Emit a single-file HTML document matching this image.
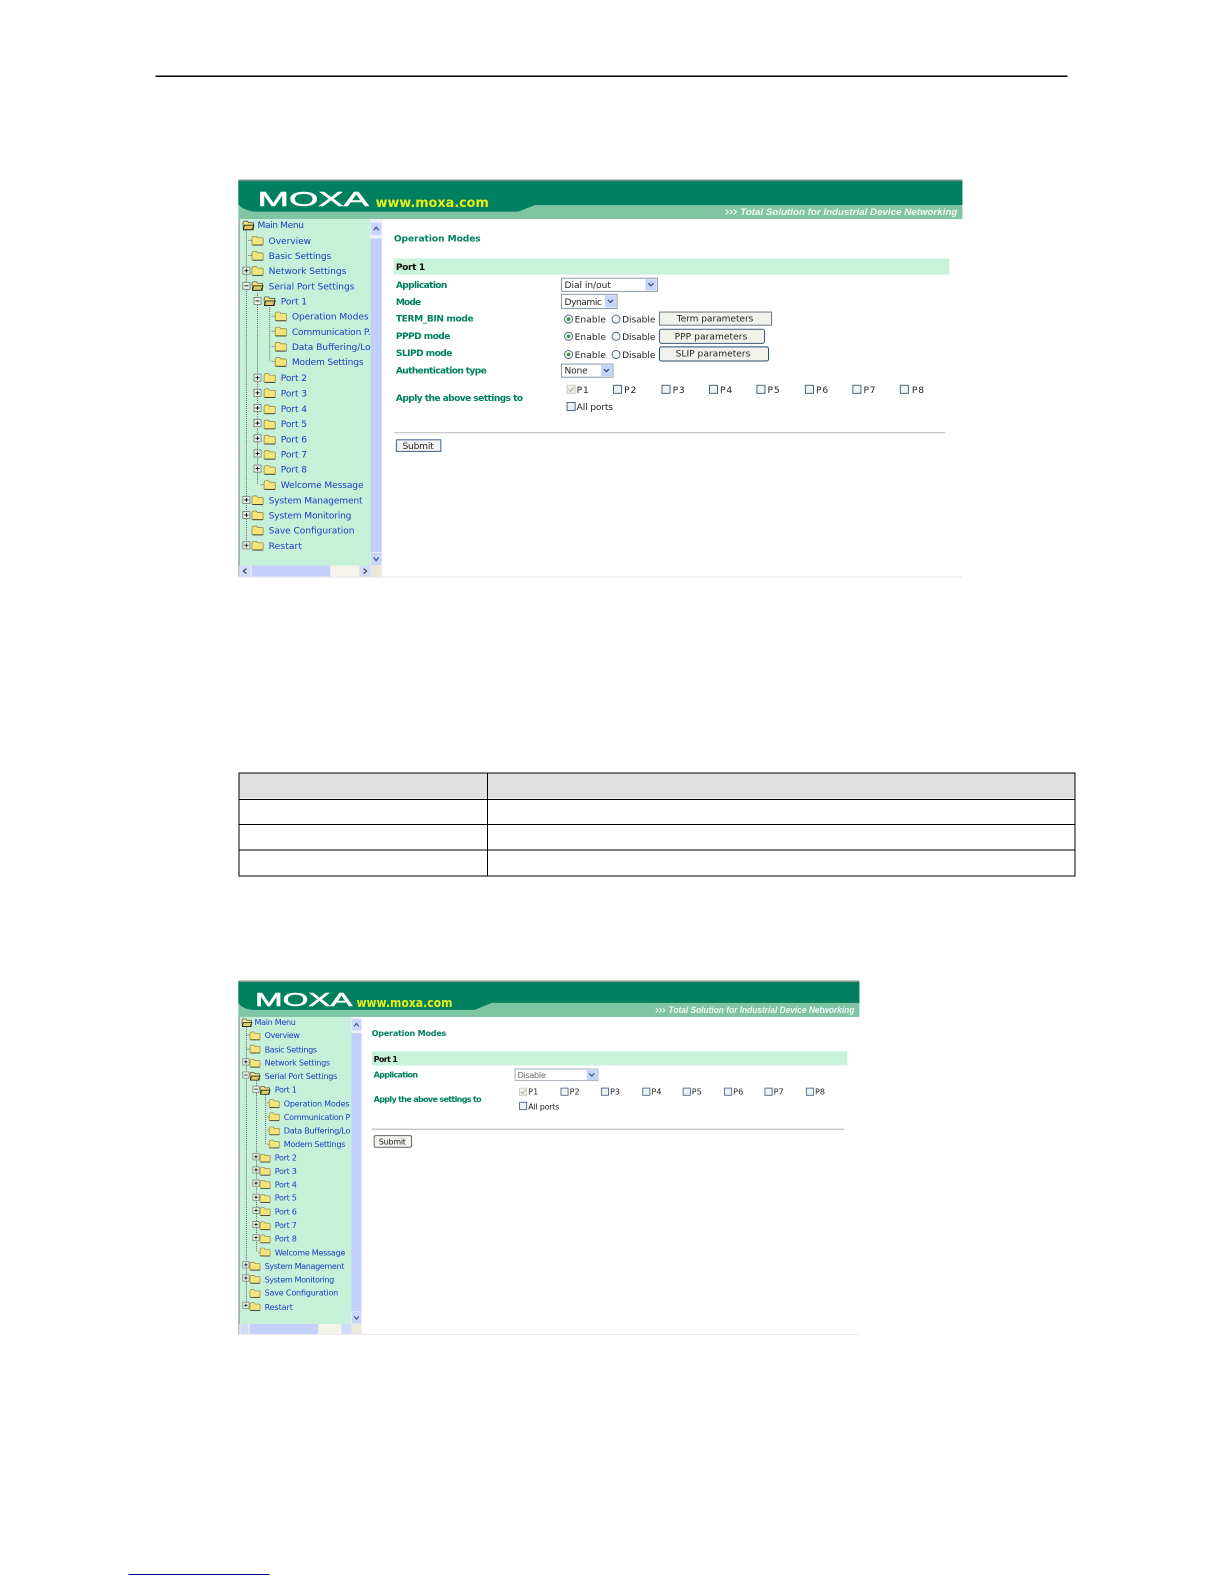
<!DOCTYPE html>
<html><head><meta charset="utf-8"><title>Operation Modes</title>
<style>
html,body{margin:0;padding:0;background:#fff;width:1224px;height:1584px;overflow:hidden}
svg{display:block}
text{font-family:"DejaVu Sans","Liberation Sans",sans-serif;font-size:9px}
.s2 .t{font-size:8px}
.t{fill:#1a3cc4}
.g{fill:#00805f;font-weight:bold}
.k{fill:#222}
.b{fill:#111;font-weight:bold}
.d{stroke:#666;stroke-width:1;stroke-dasharray:1 1;fill:none}
</style></head><body>
<svg width="1224" height="1584" viewBox="0 0 1212 1568.500" xmlns="http://www.w3.org/2000/svg">
<defs>
<symbol id="f" viewBox="0 0 12 10" overflow="visible"><path d="M0.500 2.500 L1.500 1 H5 L6 2.500 H11 Q11.500 2.500 11.500 3 V9 Q11.500 9.500 11 9.500 H1 Q0.500 9.500 0.500 9 Z" fill="#f4e47a" stroke="#8a8040" stroke-width="0.7"/><path d="M1 9.700H11.500" stroke="#333" stroke-width="0.8"/></symbol>
<symbol id="o" viewBox="0 0 12 10" overflow="visible"><path d="M0.500 2.500 L1.500 1 H5 L6 2.500 H11 V9.500 H1 Z" fill="#f4e47a" stroke="#555" stroke-width="0.8"/><path d="M2 5 H11.500 L9.500 9.500 H1 Z" fill="#e0cc66" stroke="#222" stroke-width="0.9"/></symbol>
<symbol id="p" viewBox="0 0 8 8" overflow="visible"><rect x="0.500" y="0.500" width="7" height="7" fill="#e8f4ec" stroke="#777" stroke-width="0.8"/><path d="M2 4H6M4 2V6" stroke="#111" stroke-width="0.9"/></symbol>
<symbol id="m" viewBox="0 0 8 8" overflow="visible"><rect x="0.500" y="0.500" width="7" height="7" fill="#e8f4ec" stroke="#777" stroke-width="0.8"/><path d="M2 4H6" stroke="#111" stroke-width="0.9"/></symbol>
<symbol id="c" viewBox="0 0 9 9" overflow="visible"><rect x="0.500" y="0.500" width="8" height="8" fill="#eef0f2" stroke="#3d5a78" stroke-width="0.9"/></symbol>
<symbol id="cd" viewBox="0 0 9 9" overflow="visible"><rect x="0.500" y="0.500" width="8" height="8" fill="#f0f0ea" stroke="#c4c4bc" stroke-width="0.9"/><path d="M2 4.500 L4 6.500 L7 2.500" fill="none" stroke="#a8a8a0" stroke-width="1"/></symbol>
<symbol id="r" viewBox="0 0 9 9" overflow="visible"><circle cx="4.500" cy="4.500" r="4" fill="#f4f6f4" stroke="#46607a" stroke-width="0.9"/><circle cx="4.500" cy="4.500" r="1.800" fill="#2f9a4c"/></symbol>
<symbol id="r0" viewBox="0 0 9 9" overflow="visible"><circle cx="4.500" cy="4.500" r="4" fill="#f4f6f4" stroke="#46607a" stroke-width="0.9"/></symbol>
<symbol id="ar" viewBox="0 0 11 13" overflow="visible"><rect x="0" y="0" width="11" height="13" fill="#c8d6fa" stroke="#e8eefc" stroke-width="0.8"/><path d="M3 5 L5.500 8 L8 5" fill="none" stroke="#4a5f9a" stroke-width="1.400"/></symbol>
<filter id="bl" x="0" y="0" width="100%" height="100%"><feGaussianBlur stdDeviation="0.3"/></filter>
</defs>

<rect x="154" y="75" width="903" height="1" fill="#000" shape-rendering="crispEdges"/>

<!-- SCREEN 1 -->
<g filter="url(#bl)">
<rect x="236" y="178" width="717" height="393" fill="#fff"/>
<rect x="236" y="178" width="717" height="39" fill="#7fc4a3"/>
<path d="M236 178 H953 V203 H530 L513 209.500 H252 Q240 208 236 202 Z" fill="#00805f"/>
<rect x="236" y="178" width="717" height="1.500" fill="#7a8a84"/>
<text transform="translate(255 204) scale(1.36 1)" style="font-size:20px;font-family:'Liberation Sans',sans-serif" fill="#fff" stroke="#fff" stroke-width="0.5" textLength="81" lengthAdjust="spacingAndGlyphs">MOXA</text>
<text x="372" y="205" style="font-size:13.500px;font-family:'DejaVu Sans',sans-serif;font-weight:bold" fill="#e6ee1e" textLength="112" lengthAdjust="spacingAndGlyphs">www.moxa.com</text>
<text x="718" y="213" style="font-size:9.500px;font-weight:bold;font-style:italic" fill="#fff" textLength="12" lengthAdjust="spacingAndGlyphs">&gt;&gt;&gt;</text>
<text x="733" y="213" style="font-size:9.500px;font-style:italic;font-family:'Liberation Sans',sans-serif;font-weight:bold" fill="#f2faf6" textLength="215" lengthAdjust="spacingAndGlyphs">Total Solution for Industrial Device Networking</text>

<rect x="237" y="217" width="130" height="354" fill="#c6f0d8"/>
<rect x="236" y="217" width="1.500" height="354" fill="#98a8a0"/>
<rect x="367" y="217" width="11" height="343" fill="#c2cffa"/>
<rect x="367" y="217" width="11" height="19" fill="#f0f2f4"/>
<use href="#ar" width="11" height="13" transform="translate(367 220) scale(1 -1) translate(0 -13)"/>
<use href="#ar" x="367" y="547" width="11" height="13"/>
<rect x="237" y="560" width="141" height="11" fill="#f4f4ec"/>
<rect x="249" y="560" width="78" height="11" fill="#c2d0fa"/>
<rect x="238" y="560" width="10" height="11" fill="#d0dcfa"/>
<rect x="356" y="560" width="11" height="11" fill="#d0dcfa"/>
<path d="M244 563 L241 565.500 L244 568M360 563 L363 565.500 L360 568" fill="none" stroke="#445" stroke-width="1.200"/>
<rect x="367" y="560" width="11" height="11" fill="#ece9d8"/>
<rect x="236" y="571" width="717" height="1" fill="#e8e8e8"/>

<path class="d" d="M244 228V540M246 238H250M246 253H250M255 290V480M258 480H262M267 304V358M269 313H273M269 328H273M269 343H273M269 358H273"/>
<use href="#o" x="240" y="218" width="12" height="10"/>
<text class="t" x="255" y="226" textLength="46" lengthAdjust="spacing">Main Menu</text>
<use href="#f" x="249" y="233" width="12" height="10"/><text class="t" x="266" y="241.500" textLength="42">Overview</text>
<use href="#f" x="249" y="248" width="12" height="10"/><text class="t" x="266" y="256.500" textLength="62">Basic Settings</text>
<use href="#p" x="240" y="264" width="8" height="8"/><use href="#f" x="249" y="263" width="12" height="10"/><text class="t" x="266" y="271.500" textLength="77">Network Settings</text>
<use href="#m" x="240" y="279" width="8" height="8"/><use href="#o" x="249" y="278" width="12" height="10"/><text class="t" x="266" y="286.500" textLength="85">Serial Port Settings</text>
<use href="#m" x="251" y="294" width="8" height="8"/><use href="#o" x="261" y="293" width="12" height="10"/><text class="t" x="278" y="301.500" textLength="26">Port 1</text>
<use href="#f" x="272" y="308" width="12" height="10"/><text class="t" x="289" y="316.500" textLength="76">Operation Modes</text>
<use href="#f" x="272" y="323" width="12" height="10"/><text class="t" x="289" y="331.500" textLength="78">Communication P.</text>
<use href="#f" x="272" y="338" width="12" height="10"/><text class="t" x="289" y="346.500" textLength="78">Data Buffering/Lo</text>
<use href="#f" x="272" y="353" width="12" height="10"/><text class="t" x="289" y="361.500" textLength="71">Modem Settings</text>
<use href="#p" x="251" y="370" width="8" height="8"/><use href="#f" x="261" y="369" width="12" height="10"/><text class="t" x="278" y="377.500" textLength="26">Port 2</text>
<use href="#p" x="251" y="385" width="8" height="8"/><use href="#f" x="261" y="384" width="12" height="10"/><text class="t" x="278" y="392.500" textLength="26">Port 3</text>
<use href="#p" x="251" y="400" width="8" height="8"/><use href="#f" x="261" y="400" width="12" height="10"/><text class="t" x="278" y="408" textLength="26">Port 4</text>
<use href="#p" x="251" y="415" width="8" height="8"/><use href="#f" x="261" y="415" width="12" height="10"/><text class="t" x="278" y="423" textLength="26">Port 5</text>
<use href="#p" x="251" y="430" width="8" height="8"/><use href="#f" x="261" y="430" width="12" height="10"/><text class="t" x="278" y="438" textLength="26">Port 6</text>
<use href="#p" x="251" y="445" width="8" height="8"/><use href="#f" x="261" y="445" width="12" height="10"/><text class="t" x="278" y="453" textLength="26">Port 7</text>
<use href="#p" x="251" y="460" width="8" height="8"/><use href="#f" x="261" y="460" width="12" height="10"/><text class="t" x="278" y="468" textLength="26">Port 8</text>
<use href="#f" x="261" y="475" width="12" height="10"/><text class="t" x="278" y="483" textLength="82">Welcome Message</text>
<use href="#p" x="240" y="491" width="8" height="8"/><use href="#f" x="249" y="490" width="12" height="10"/><text class="t" x="266" y="498.500" textLength="93">System Management</text>
<use href="#p" x="240" y="506" width="8" height="8"/><use href="#f" x="249" y="505" width="12" height="10"/><text class="t" x="266" y="513.500" textLength="82">System Monitoring</text>
<use href="#f" x="249" y="520" width="12" height="10"/><text class="t" x="266" y="528.500" textLength="85">Save Configuration</text>
<use href="#p" x="240" y="536" width="8" height="8"/><use href="#f" x="249" y="535" width="12" height="10"/><text class="t" x="266" y="543.500" textLength="33">Restart</text>

<text class="g" x="390" y="239" textLength="86">Operation Modes</text>
<rect x="390" y="256" width="550" height="16" fill="#c8f2da"/>
<text class="b" x="392" y="267.500" textLength="29">Port 1</text>
<text class="g" x="392" y="285" textLength="51">Application</text>
<text class="g" x="392" y="302" textLength="25">Mode</text>
<text class="g" x="392" y="318.500" textLength="77">TERM_BIN mode</text>
<text class="g" x="392" y="335.500" textLength="54">PPPD mode</text>
<text class="g" x="392" y="352.500" textLength="56">SLIPD mode</text>
<text class="g" x="392" y="370" textLength="90">Authentication type</text>
<text class="g" x="392" y="397" textLength="126">Apply the above settings to</text>

<rect x="556" y="275.500" width="95" height="13" fill="#fff" stroke="#8a9aa8"/>
<rect x="639" y="276.500" width="11" height="11" fill="#c6d4fa"/><path d="M642 280.500L644.500 283L647 280.500" fill="none" stroke="#3a4f8a" stroke-width="1.300"/>
<text class="k" x="559" y="285" textLength="46">Dial in/out</text>
<rect x="556" y="291.500" width="55" height="14" fill="#fff" stroke="#8a9aa8"/>
<rect x="599" y="292.500" width="11" height="12" fill="#c6d4fa"/><path d="M602 297L604.500 299.500L607 297" fill="none" stroke="#3a4f8a" stroke-width="1.300"/>
<text class="k" x="559" y="302" textLength="37">Dynamic</text>
<rect x="556" y="360.500" width="51" height="13" fill="#fff" stroke="#8a9aa8"/>
<rect x="595" y="361.500" width="11" height="11" fill="#c6d4fa"/><path d="M598 365.500L600.500 368L603 365.500" fill="none" stroke="#3a4f8a" stroke-width="1.300"/>
<text class="k" x="559" y="370" textLength="23">None</text>

<use href="#r" x="558.500" y="311.500" width="9" height="9"/><text class="k" x="569" y="319.500" textLength="31">Enable</text>
<use href="#r0" x="605.500" y="311.500" width="9" height="9"/><text class="k" x="616" y="319.500" textLength="33">Disable</text>
<use href="#r" x="558.500" y="328.500" width="9" height="9"/><text class="k" x="569" y="336.500" textLength="31">Enable</text>
<use href="#r0" x="605.500" y="328.500" width="9" height="9"/><text class="k" x="616" y="336.500" textLength="33">Disable</text>
<use href="#r" x="558.500" y="346.500" width="9" height="9"/><text class="k" x="569" y="354.500" textLength="31">Enable</text>
<use href="#r0" x="605.500" y="346.500" width="9" height="9"/><text class="k" x="616" y="354.500" textLength="33">Disable</text>

<rect x="653" y="309" width="111" height="13" fill="#f2f2ec" stroke="#6a7a88"/>
<text class="k" x="670" y="318.500" textLength="76">Term parameters</text>
<rect x="653" y="326" width="104" height="14" rx="2" fill="#f2f2ec" stroke="#405a74"/>
<text class="k" x="668" y="336" textLength="72">PPP parameters</text>
<rect x="653" y="343.500" width="108" height="14" rx="2" fill="#f2f2ec" stroke="#264a6a"/>
<text class="k" x="669" y="353" textLength="74">SLIP parameters</text>

<use href="#cd" x="561" y="381" width="9" height="9"/><text class="k" x="571" y="389" textLength="12">P1</text>
<use href="#c" x="607" y="381" width="9" height="9"/><text class="k" x="618" y="389" textLength="12">P2</text>
<use href="#c" x="655" y="381" width="9" height="9"/><text class="k" x="666" y="389" textLength="12">P3</text>
<use href="#c" x="702" y="381" width="9" height="9"/><text class="k" x="713" y="389" textLength="12">P4</text>
<use href="#c" x="749" y="381" width="9" height="9"/><text class="k" x="760" y="389" textLength="12">P5</text>
<use href="#c" x="797" y="381" width="9" height="9"/><text class="k" x="808" y="389" textLength="12">P6</text>
<use href="#c" x="844" y="381" width="9" height="9"/><text class="k" x="855" y="389" textLength="12">P7</text>
<use href="#c" x="891" y="381" width="9" height="9"/><text class="k" x="903" y="389" textLength="12">P8</text>
<use href="#c" x="561" y="398" width="9" height="9"/><text class="k" x="571" y="406" textLength="36">All ports</text>
<rect x="390" y="428" width="546" height="1" fill="#b8b8b8"/>
<rect x="392.500" y="435.500" width="44" height="11.500" fill="#f2f2f2" stroke="#44648c"/>
<text class="k" x="398.500" y="444.500" textLength="31">Submit</text>
</g>

<!-- TABLE -->
<rect x="236.500" y="765.500" width="828" height="25" fill="#e0e0e0"/>
<path shape-rendering="crispEdges" d="M236.500 765.500H1064.500V867.500H236.500ZM482.500 765.500V867.500M236.500 791.500H1064.500M236.500 816.500H1064.500M236.500 841.500H1064.500" fill="none" stroke="#000" stroke-width="1"/>

<!-- SCREEN 2 -->
<g filter="url(#bl)" class="s2">
<rect x="236" y="971" width="615" height="350" fill="#fff"/>
<rect x="236" y="971" width="615" height="36" fill="#7fc4a3"/>
<path d="M236 971 H851 V993 H487 L470 1000 H250 Q240 999 236 993 Z" fill="#00805f"/>
<rect x="236" y="971" width="615" height="1.500" fill="#8a9a8c"/>
<text transform="translate(252.500 996) scale(1.36 1)" style="font-size:18px;font-family:'Liberation Sans',sans-serif" fill="#fff" stroke="#fff" stroke-width="0.5" textLength="71" lengthAdjust="spacingAndGlyphs">MOXA</text>
<text x="353" y="997" style="font-size:12px;font-family:'DejaVu Sans',sans-serif;font-weight:bold" fill="#e6ee1e" textLength="95" lengthAdjust="spacingAndGlyphs">www.moxa.com</text>
<text x="649" y="1003" style="font-size:9px;font-weight:bold;font-style:italic" fill="#fff" textLength="10" lengthAdjust="spacingAndGlyphs">&gt;&gt;&gt;</text>
<text x="662" y="1003" style="font-size:9px;font-style:italic;font-family:'Liberation Sans',sans-serif;font-weight:bold" fill="#f2faf6" textLength="184" lengthAdjust="spacingAndGlyphs">Total Solution for Industrial Device Networking</text>

<rect x="237" y="1007" width="111" height="314" fill="#c6f0d8"/>
<rect x="236" y="1007" width="1.500" height="314" fill="#98a8a0"/>
<rect x="348" y="1007" width="10" height="303" fill="#c2cffa"/>
<rect x="348" y="1007" width="10" height="16" fill="#f0f2f4"/>
<use href="#ar" width="11" height="13" transform="translate(348 1009) scale(0.9 -0.9) translate(0 -13)"/>
<use href="#ar" width="11" height="13" transform="translate(348 1299) scale(0.9)"/>
<rect x="237" y="1311" width="121" height="10" fill="#f4f4ec"/>
<rect x="247" y="1311" width="68" height="10" fill="#c2d0fa"/>
<rect x="238" y="1311" width="8" height="10" fill="#d0dcfa"/>
<rect x="338" y="1311" width="10" height="10" fill="#d0dcfa"/>
<rect x="348" y="1311" width="10" height="10" fill="#ece9d8"/>
<rect x="236" y="1321" width="615" height="1" fill="#eee"/>

<path class="d" d="M244 1017V1294M244 1025H248M244 1039H248M254 1070V1240M256 1240H259M263 1084V1133M265 1092H268M265 1106H268M265 1119H268M265 1133H268"/>
<use href="#o" x="239" y="1008" width="11" height="9"/>
<text class="t" x="252" y="1015" textLength="41">Main Menu</text>
<use href="#f" x="247" y="1021" width="11" height="9"/><text class="t" x="262" y="1028" textLength="35">Overview</text>
<use href="#f" x="247" y="1034" width="11" height="9"/><text class="t" x="262" y="1042" textLength="52">Basic Settings</text>
<use href="#p" x="240" y="1048" width="7" height="7"/><use href="#f" x="247" y="1048" width="11" height="9"/><text class="t" x="262" y="1055" textLength="65">Network Settings</text>
<use href="#m" x="240" y="1061" width="7" height="7"/><use href="#o" x="247" y="1061" width="11" height="9"/><text class="t" x="262" y="1068.500" textLength="72">Serial Port Settings</text>
<use href="#m" x="250" y="1075" width="7" height="7"/><use href="#o" x="257" y="1075" width="11" height="9"/><text class="t" x="272" y="1082" textLength="22">Port 1</text>
<use href="#f" x="266" y="1088" width="11" height="9"/><text class="t" x="281" y="1095.500" textLength="65">Operation Modes</text>
<use href="#f" x="266" y="1101" width="11" height="9"/><text class="t" x="281" y="1109" textLength="66">Communication P</text>
<use href="#f" x="266" y="1115" width="11" height="9"/><text class="t" x="281" y="1122.500" textLength="66">Data Buffering/Lo</text>
<use href="#f" x="266" y="1128" width="11" height="9"/><text class="t" x="281" y="1136" textLength="61">Modem Settings</text>
<use href="#p" x="250" y="1142" width="7" height="7"/><use href="#f" x="257" y="1142" width="11" height="9"/><text class="t" x="272" y="1149" textLength="22">Port 2</text>
<use href="#p" x="250" y="1155" width="7" height="7"/><use href="#f" x="257" y="1155" width="11" height="9"/><text class="t" x="272" y="1162.500" textLength="22">Port 3</text>
<use href="#p" x="250" y="1168" width="7" height="7"/><use href="#f" x="257" y="1168" width="11" height="9"/><text class="t" x="272" y="1176" textLength="22">Port 4</text>
<use href="#p" x="250" y="1182" width="7" height="7"/><use href="#f" x="257" y="1182" width="11" height="9"/><text class="t" x="272" y="1189" textLength="22">Port 5</text>
<use href="#p" x="250" y="1195" width="7" height="7"/><use href="#f" x="257" y="1195" width="11" height="9"/><text class="t" x="272" y="1202.500" textLength="22">Port 6</text>
<use href="#p" x="250" y="1209" width="7" height="7"/><use href="#f" x="257" y="1209" width="11" height="9"/><text class="t" x="272" y="1216" textLength="22">Port 7</text>
<use href="#p" x="250" y="1222" width="7" height="7"/><use href="#f" x="257" y="1222" width="11" height="9"/><text class="t" x="272" y="1229.500" textLength="22">Port 8</text>
<use href="#f" x="257" y="1235" width="11" height="9"/><text class="t" x="272" y="1243" textLength="70">Welcome Message</text>
<use href="#p" x="240" y="1249" width="7" height="7"/><use href="#f" x="247" y="1249" width="11" height="9"/><text class="t" x="262" y="1256.500" textLength="79">System Management</text>
<use href="#p" x="240" y="1262" width="7" height="7"/><use href="#f" x="247" y="1262" width="11" height="9"/><text class="t" x="262" y="1270" textLength="69">System Monitoring</text>
<use href="#f" x="247" y="1276" width="11" height="9"/><text class="t" x="262" y="1283" textLength="73">Save Configuration</text>
<use href="#p" x="240" y="1289" width="7" height="7"/><use href="#f" x="247" y="1289" width="11" height="9"/><text class="t" x="262" y="1297" textLength="28">Restart</text>

<text class="g" x="368" y="1026" style="font-size:8px" textLength="74">Operation Modes</text>
<rect x="368" y="1041" width="471" height="14" fill="#c8f2da"/>
<text class="b" x="370" y="1051.500" style="font-size:8px" textLength="24">Port 1</text>
<text class="g" x="370" y="1067" style="font-size:8px" textLength="44">Application</text>
<text class="g" x="370" y="1091" style="font-size:8px" textLength="107">Apply the above settings to</text>
<rect x="510" y="1058.500" width="82" height="11.500" fill="#fff" stroke="#a8b0b8"/>
<rect x="581" y="1059.500" width="10" height="10" fill="#c6d4fa"/><path d="M583.500 1063L586 1065.500L588.500 1063" fill="none" stroke="#3a4f8a" stroke-width="1.200"/>
<text x="512.500" y="1067.500" style="font-size:8px" fill="#666" textLength="28">Disable</text>
<use href="#cd" x="514" y="1077" width="8" height="8"/><text class="k" x="523" y="1084" style="font-size:8px" textLength="10">P1</text>
<use href="#c" x="555" y="1077" width="8" height="8"/><text class="k" x="564" y="1084" style="font-size:8px" textLength="10">P2</text>
<use href="#c" x="595" y="1077" width="8" height="8"/><text class="k" x="604" y="1084" style="font-size:8px" textLength="10">P3</text>
<use href="#c" x="636" y="1077" width="8" height="8"/><text class="k" x="645" y="1084" style="font-size:8px" textLength="10">P4</text>
<use href="#c" x="676" y="1077" width="8" height="8"/><text class="k" x="685" y="1084" style="font-size:8px" textLength="10">P5</text>
<use href="#c" x="717" y="1077" width="8" height="8"/><text class="k" x="726" y="1084" style="font-size:8px" textLength="10">P6</text>
<use href="#c" x="757" y="1077" width="8" height="8"/><text class="k" x="766" y="1084" style="font-size:8px" textLength="10">P7</text>
<use href="#c" x="798" y="1077" width="8" height="8"/><text class="k" x="807" y="1084" style="font-size:8px" textLength="10">P8</text>
<use href="#c" x="514" y="1091" width="8" height="8"/><text class="k" x="523" y="1098.500" style="font-size:8px" textLength="31">All ports</text>
<rect x="368" y="1117.500" width="468" height="1.500" fill="#c8c8c4"/>
<rect x="370.500" y="1124.500" width="37" height="11.500" rx="1.500" fill="#f4f4f0" stroke="#666"/>
<text class="k" x="375" y="1133.500" style="font-size:8px" textLength="27">Submit</text>
</g>

<rect x="127" y="1558.500" width="140" height="1.200" fill="#000080" shape-rendering="crispEdges"/>
</svg>
</body></html>
